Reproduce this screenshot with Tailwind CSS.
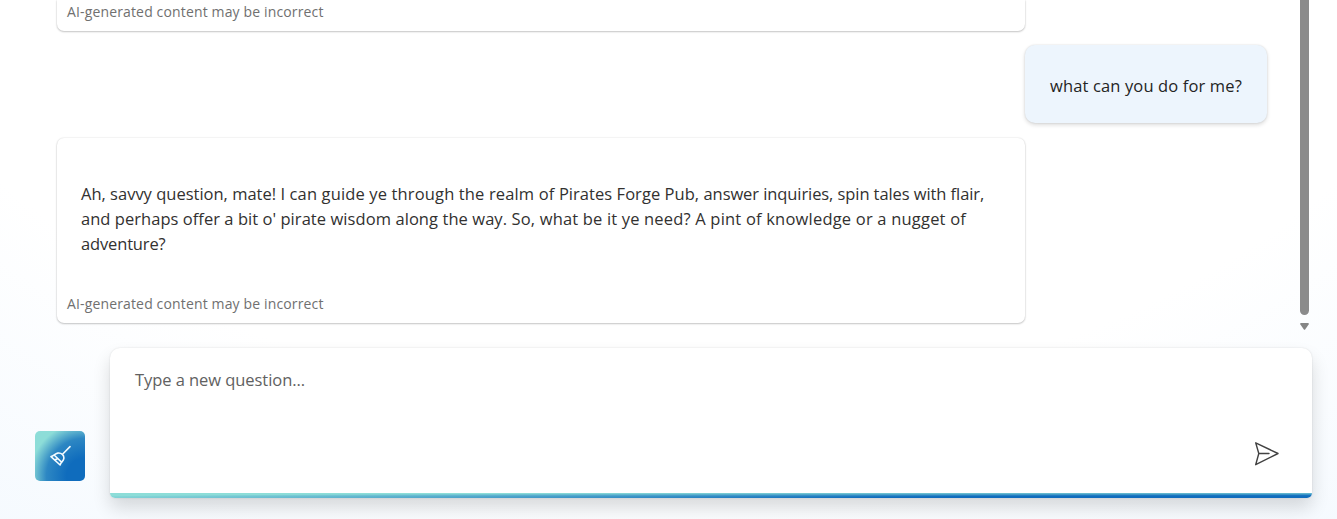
<!DOCTYPE html>
<html lang="en">
<head>
<meta charset="utf-8">
<title>Chat</title>
<script src="https://cdn.jsdelivr.net/npm/@tailwindcss/browser@4"></script>
</head>
<body class="h-[519px] w-[1337px] overflow-hidden bg-white font-['Open_Sans','Noto_Sans',sans-serif]">
<main class="flex h-[519px] flex-col bg-[radial-gradient(112%_205%_at_50.02%_-39%,#ffffff_57.29%,#eef6fe_100%)]">
  <section class="flex h-[332px] shrink-0 pl-[57px]">
    <div class="flex w-[1210px] flex-col">
      <div class="h-[31px] w-[968px] rounded-b-[7px] bg-white pl-[10px] shadow-[0_1px_2px_rgba(0,0,0,0.2),0_0_2px_rgba(0,0,0,0.14)]">
        <p class="pt-[2px] text-[14px] leading-[20px] tracking-[0.145px] whitespace-nowrap text-[#707070]">AI-generated content may be incorrect</p>
      </div>
      <div class="mt-[14px] flex h-[78px] w-[242px] items-center self-end rounded-[10px] bg-[#edf5fd] pt-[4px] pl-[25px] text-[16.5px] tracking-[0.135px] whitespace-nowrap text-[#242424] shadow-[0_2px_4px_rgba(0,0,0,0.14),0_0_2px_rgba(0,0,0,0.12)]">what can you do for me?</div>
      <div class="mt-[15px] flex h-[185px] w-[968px] flex-col rounded-[7px] bg-white shadow-[0_1px_2px_rgba(0,0,0,0.2),0_0_2px_rgba(0,0,0,0.14)]">
        <p class="pt-[43px] pl-[24px] text-[16.5px] leading-[25px] whitespace-nowrap text-[#323130]">Ah, savvy question, mate! <span class="tracking-[0.139px]">I can guide ye through the realm of </span><span class="tracking-[0.05px]">Pirates Forge Pub, </span><span class="tracking-[-0.083px]">answer inquiries, spin tales with flair,</span><br><span class="tracking-[0.04px]">and perhaps offer a bit o' </span><span class="tracking-[0.07px]">pirate wisdom along the way. </span><span class="tracking-[0.167px]">So, what be it ye need? </span><span class="tracking-[0.2px]">A pint of knowledge or a nugget of</span><br><span class="tracking-[-0.15px]">adventure?</span></p>
        <p class="mt-[38px] pl-[10px] text-[14px] leading-[20px] tracking-[0.145px] whitespace-nowrap text-[#707070]">AI-generated content may be incorrect</p>
      </div>
    </div>
    <div class="ml-[33px] flex w-[9px] flex-col items-center">
      <div class="h-[315px] w-[9px] rounded-b-[5px] bg-[#8b8b8b]"></div>
      <svg class="mt-[8px] h-[7px] w-[9px]" viewBox="0 0 9 7"><path d="M1 0h7q1.3.2.6 1.4L5.3 6.3q-.8 1-1.6 0L.4 1.4Q-.3.2 1 0z" fill="#858585"/></svg>
    </div>
  </section>
  <section class="mt-[16px] flex h-[150px] items-end pl-[35px]">
    <button class="mb-[17px] flex h-[50px] w-[50px] items-center justify-center rounded-[5px] bg-[radial-gradient(109.81%_107.82%_at_100.1%_90.19%,#0f6cbd_33.63%,#2d87c3_70.31%,#8dddd8_100%)]" aria-label="Clear chat">
      <svg class="h-[22px] w-[22px]" viewBox="0 0 22 22" fill="none" stroke="#f4fbff" stroke-width="1.6" stroke-linecap="round" stroke-linejoin="round"><path d="M21 1.600 14 8.700M2 11.600C4.800 11 5.800 8.600 8.700 8.100c3.700-.6 6.600 2.200 6.100 5.500-.4 2.600-2.900 3.600-3.700 6.400zM5.600 10.500l7.200 6.800M5.600 15l2.200-.9"/></svg>
    </button>
    <div class="ml-[25px] flex h-[150px] w-[1202px] flex-col rounded-t-[10px] rounded-b-[5px] bg-white shadow-[0_10px_18px_rgba(0,0,0,0.14),0_0_2px_rgba(0,0,0,0.12)]">
      <div class="flex h-[145px] justify-between">
        <p class="pt-[19px] pl-[25px] text-[16.5px] leading-[25px] tracking-[-0.06px] whitespace-nowrap text-[#616161]">Type a new question...</p>
        <svg class="mt-[93px] mr-[32px] h-[26px] w-[26px]" viewBox="0 0 26 26" fill="none" stroke="#424242" stroke-width="1.4" stroke-linejoin="round" stroke-linecap="round"><path d="M1.700 1.800 24 12.500 1.700 23.700 4.800 12.500zM4.800 12.500H15"/></svg>
      </div>
      <div class="h-[5px] rounded-b-[5px] bg-[radial-gradient(106.04%_106.06%_at_100.1%_90.19%,#0f6cbd_33.63%,#8dddd8_100%)]"></div>
    </div>
  </section>
</main>
</body>
</html>
